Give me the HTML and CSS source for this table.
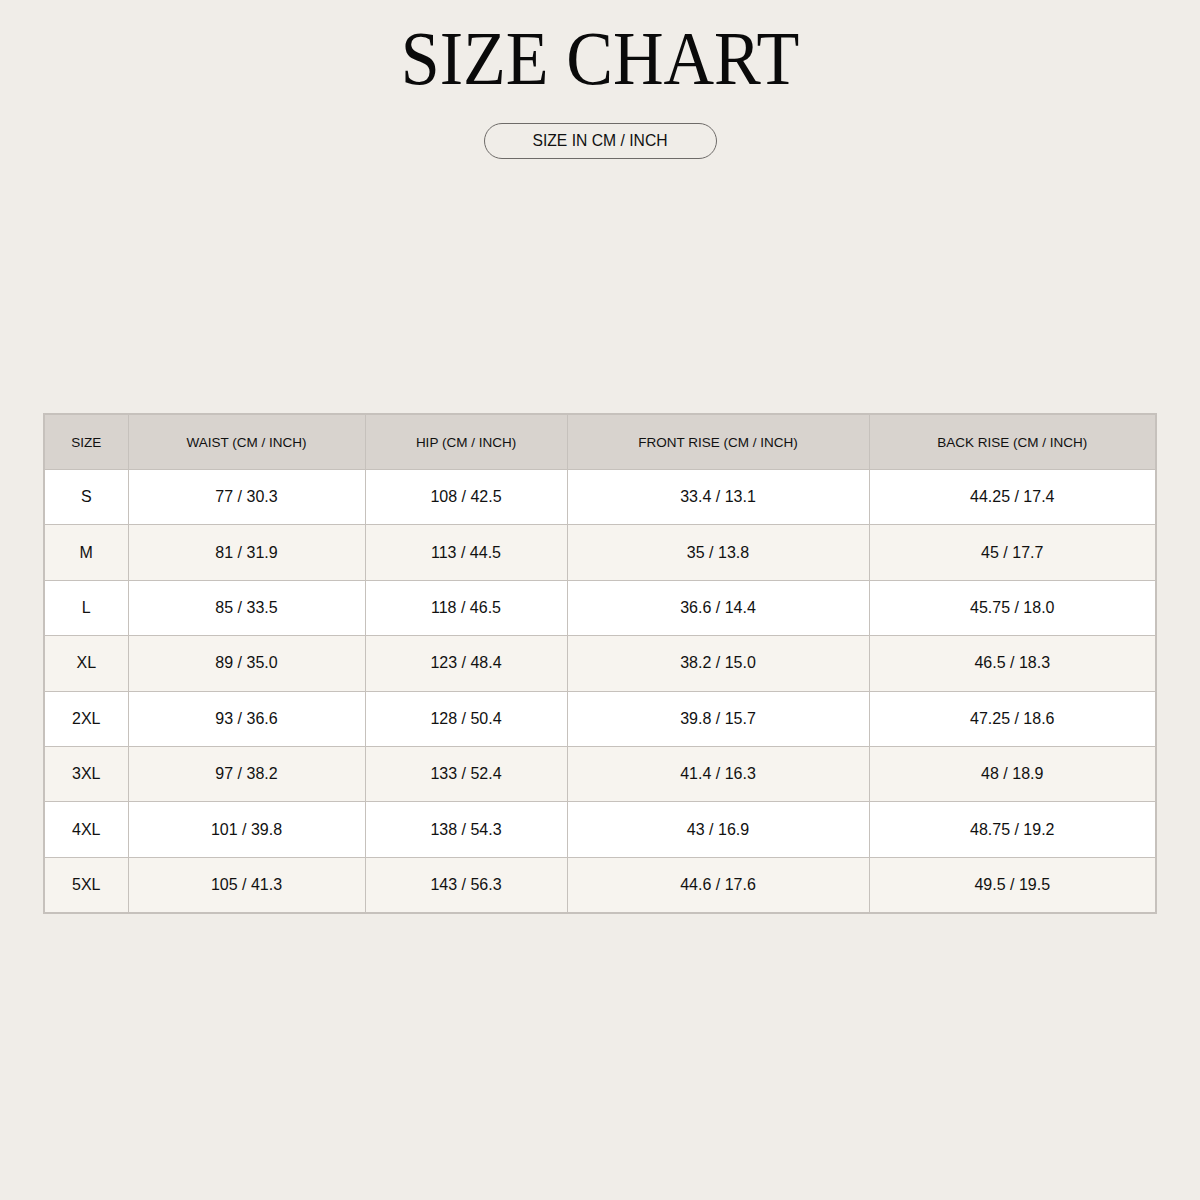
FILE: index.html
```html
<!DOCTYPE html>
<html>
<head>
<meta charset="utf-8">
<link rel="stylesheet" href="styles.css">
</head>
<body>
<div class="page">
  <h1 class="title">SIZE CHART</h1>
  <div class="pill">SIZE IN CM / INCH</div>
  <table class="chart">
    <colgroup>
      <col class="c1"><col class="c2"><col class="c3"><col class="c4"><col class="c5">
    </colgroup>
    <thead>
      <tr><th>SIZE</th><th>WAIST (CM / INCH)</th><th>HIP (CM / INCH)</th><th>FRONT RISE (CM / INCH)</th><th>BACK RISE (CM / INCH)</th></tr>
    </thead>
    <tbody>
      <tr><td>S</td><td>77 / 30.3</td><td>108 / 42.5</td><td>33.4 / 13.1</td><td>44.25 / 17.4</td></tr>
      <tr><td>M</td><td>81 / 31.9</td><td>113 / 44.5</td><td>35 / 13.8</td><td>45 / 17.7</td></tr>
      <tr><td>L</td><td>85 / 33.5</td><td>118 / 46.5</td><td>36.6 / 14.4</td><td>45.75 / 18.0</td></tr>
      <tr><td>XL</td><td>89 / 35.0</td><td>123 / 48.4</td><td>38.2 / 15.0</td><td>46.5 / 18.3</td></tr>
      <tr><td>2XL</td><td>93 / 36.6</td><td>128 / 50.4</td><td>39.8 / 15.7</td><td>47.25 / 18.6</td></tr>
      <tr><td>3XL</td><td>97 / 38.2</td><td>133 / 52.4</td><td>41.4 / 16.3</td><td>48 / 18.9</td></tr>
      <tr><td>4XL</td><td>101 / 39.8</td><td>138 / 54.3</td><td>43 / 16.9</td><td>48.75 / 19.2</td></tr>
      <tr><td>5XL</td><td>105 / 41.3</td><td>143 / 56.3</td><td>44.6 / 17.6</td><td>49.5 / 19.5</td></tr>
    </tbody>
  </table>
</div>
</body>
</html>
```

FILE: styles.css
```css
html, body {
  margin: 0;
  padding: 0;
  background: #f0ede8;
}
.page {
  width: 1200px;
  height: 1200px;
  display: flex;
  flex-direction: column;
  align-items: center;
  font-family: "Liberation Sans", Arial, sans-serif;
  color: #111;
}
.title {
  margin: 20px 0 0 0;
  font-family: "Liberation Serif", "Times New Roman", serif;
  font-weight: normal;
  font-size: 77px;
  line-height: 77px;
  height: 77px;
  transform: scaleX(0.91);
  color: #0a0a0a;
}
.pill {
  margin-top: 26px;
  width: 233px;
  height: 36px;
  box-sizing: border-box;
  border: 1px solid #6e6b68;
  border-radius: 18px;
  display: flex;
  align-items: center;
  justify-content: center;
  font-size: 15.7px;
  color: #111;
}
.chart {
  margin-top: 254px;
  width: 1112px;
  border-collapse: collapse;
  border: 2px solid #c6c1bc;
  table-layout: fixed;
}
.c1 { width: 84px; }
.c2 { width: 237px; }
.c3 { width: 202px; }
.c4 { width: 302px; }
.c5 { width: 287px; }
.chart th, .chart td {
  border: 1.5px solid #c6c1bc;
  text-align: center;
  vertical-align: middle;
  padding: 0;
  height: 54.4px;
}
.chart th {
  background: #d8d3ce;
  font-weight: normal;
  font-size: 13.5px;
  height: 54px;
}
.chart td {
  font-size: 16px;
}
.chart tbody tr:nth-child(odd) td { background: #ffffff; }
.chart tbody tr:nth-child(even) td { background: #f7f4ef; }
```
